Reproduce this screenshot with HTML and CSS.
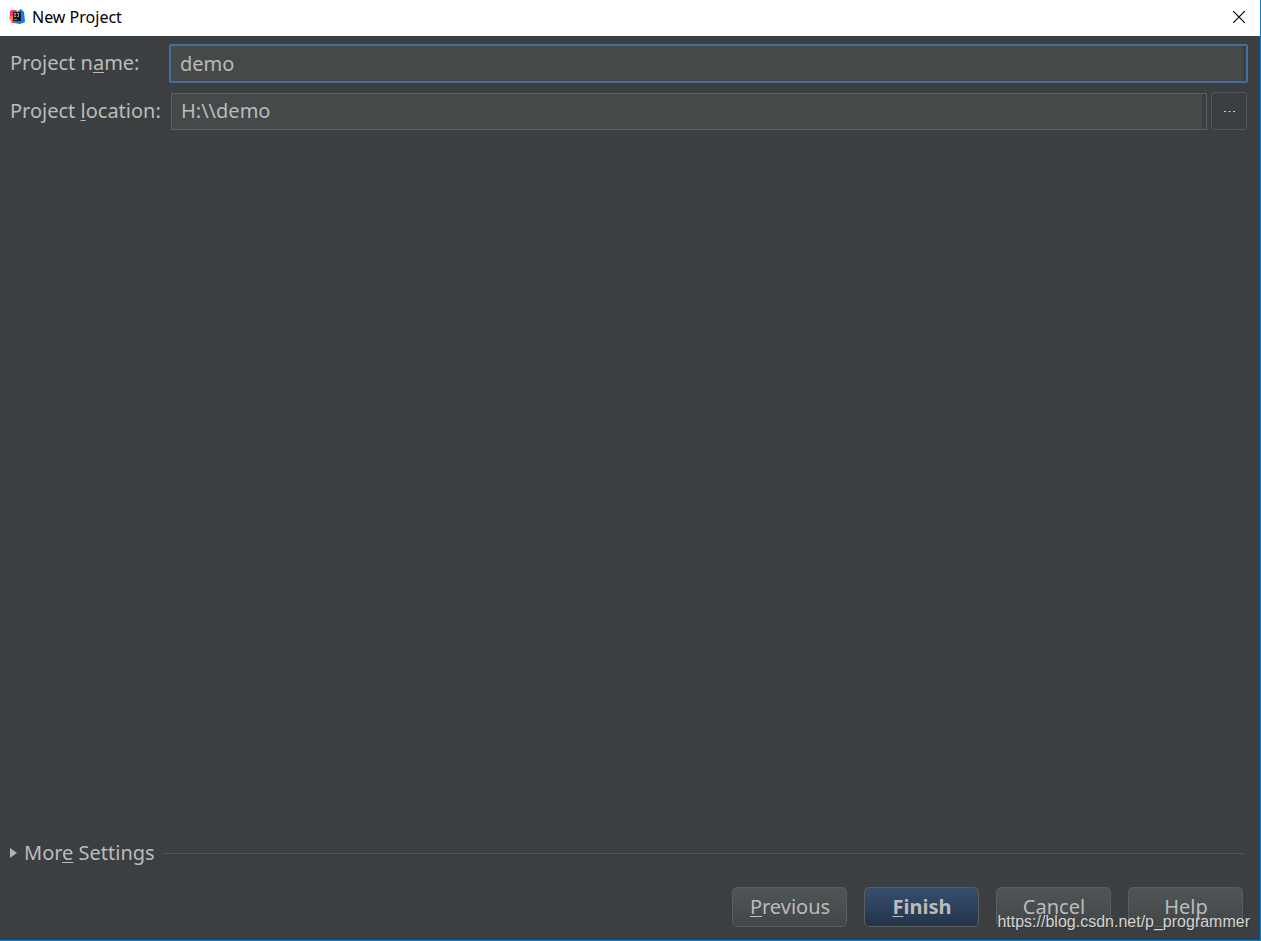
FILE: index.html
```html
<!DOCTYPE html>
<html lang="en">
<head>
  <meta charset="UTF-8" />
  <meta name="viewport" content="width=device-width, initial-scale=1.0"/>
  <title>New Project</title>
  <link rel="stylesheet" href="styles.css">
</head>
<body>

<header class="titlebar">
  <svg class="logo" width="16" height="16" viewBox="0 0 16 16" aria-hidden="true">
    <path d="M1 2L3 1L7 1L10 4L8 14L3 14L2 11L1 7z" fill="#fe3366"/>
    <path d="M0 8L4 7L5 12L1 11z" fill="#fc8a24"/>
    <path d="M9 2L12 0L15 3L16 13L11 15L5 14L9 11z" fill="#087cfa"/>
    <rect x="4" y="3" width="8" height="9" fill="#18161a"/>
    <path d="M5 4.500h2M6 4.500v3M5 7.500h2M8 4.500h2M9.500 4.500v3h-1.500" fill="none" stroke="#bbb" stroke-width="0.8"/>
    <path d="M5 10.500h3" stroke="#aaa" stroke-width="0.8"/>
  </svg>
  <h1>New Project</h1>
  <button type="button" class="close" aria-label="Close">
    <svg width="12" height="12" viewBox="0 0 12 12"><path d="M0 0L12 12M12 0L0 12" stroke="#000" stroke-width="1.2"/></svg>
  </button>
</header>

<form class="dialog">
  <div class="fields">
    <label for="name">Project n<u>a</u>me:</label>
    <input type="text" id="name" class="active" value="demo" />

    <label for="location">Project <u>l</u>ocation:</label>
    <div class="location">
      <input type="text" id="location" value="H:\\demo" />
      <button type="button" class="browse" aria-label="Browse">
        <svg width="11" height="2" viewBox="0 0 11 2"><path d="M0 1h2v1h-2zM4.500 1h2v1h-2zM9 1h2v1h-2z" fill="#ccc"/></svg>
      </button>
    </div>
  </div>

  <details class="more">
    <summary>
      <svg width="7" height="10" viewBox="0 0 7 10"><path d="M0 0L7 5L0 10z" fill="#afb1b3"/></svg>
      <span>Mor<u>e</u> Settings</span>
    </summary>
  </details>

  <div class="buttons">
    <button type="button"><u>P</u>revious</button>
    <button type="submit" class="primary"><u>F</u>inish</button>
    <button type="button">Cancel</button>
    <button type="button">Help</button>
  </div>
</form>

<div class="watermark">https://blog.csdn.net/p_programmer</div>

</body>
</html>
```
FILE: styles.css
```css
:root {
  --bg-color: #3c3f41;
  --field-bg: #45494a;
  --text-color: #bbbbbb;
  --border: #5e6162;
  --accent: #0b83dc;
}
* {
  box-sizing: border-box;
}
body {
  margin: 0;
  min-height: 100vh;
  display: flex;
  flex-direction: column;
  position: relative;
  background: var(--bg-color);
  color: var(--text-color);
  border-right: 1px solid var(--accent);
  border-bottom: 1px solid var(--accent);
  font-family: "Noto Sans", "Open Sans", sans-serif;
  font-size: 20px;
}
button, input {
  font: inherit;
  color: inherit;
}
u {
  text-decoration-thickness: 1px;
  text-underline-offset: 2px;
  text-decoration-skip-ink: none;
}
.titlebar {
  display: flex;
  align-items: center;
  height: 36px;
  padding: 0 15px 2px 9px;
  background: #fff;
  color: #000;
}
.titlebar h1 {
  flex: 1;
  margin: 0 0 0 7px;
  font-size: 16px;
  line-height: 20px;
  font-weight: normal;
}
.close {
  display: flex;
  padding: 0;
  border: none;
  background: none;
}
.dialog {
  flex: 1;
  display: flex;
  flex-direction: column;
  padding: 8px 12px 13px 10px;
}
.fields {
  display: grid;
  grid-template-columns: 151px 1fr;
  column-gap: 8px;
  row-gap: 9px;
  align-items: center;
}
label {
  line-height: 28px;
  padding-bottom: 1px;
  white-space: nowrap;
}
input {
  width: 100%;
  height: 37px;
  padding: 0 9px 2px;
  border: 1px solid var(--border);
  background: var(--field-bg);
  box-shadow: inset -4px 0 var(--bg-color);
  outline: none;
}
input.active {
  height: 39px;
  padding-bottom: 0;
  border: 2px solid #466d9f;
  border-radius: 2px;
  box-shadow: inset -3px 0 var(--bg-color);
}
.location {
  display: flex;
  align-items: center;
  gap: 4px;
  padding: 0 1px 0 2px;
}
.location input {
  flex: 1;
  min-width: 0;
}
.browse {
  display: flex;
  align-items: center;
  justify-content: center;
  width: 36px;
  height: 38px;
  padding: 0;
  border: 1px solid #55585a;
  border-radius: 3px;
  background: none;
}
.more {
  margin-top: auto;
}
summary {
  display: flex;
  align-items: center;
  list-style: none;
  line-height: 28px;
}
summary span {
  margin: 0 7px;
}
summary::after {
  content: "";
  flex: 1;
  height: 1px;
  margin-right: 3px;
  background: #515355;
}
.buttons {
  display: flex;
  justify-content: flex-end;
  gap: 17px;
  margin-top: 20px;
  padding-right: 5px;
}
.buttons button {
  width: 115px;
  height: 40px;
  padding: 0 0 2px 1px;
  border: 1px solid #5a5d5e;
  border-radius: 5px;
  background: linear-gradient(#505557, #414648) border-box;
}
.buttons .primary {
  background: linear-gradient(#365070, #243349) border-box;
  font-weight: bold;
}
.watermark {
  position: absolute;
  right: 10px;
  bottom: 8px;
  font: 16px/20px "Liberation Sans", Arial, sans-serif;
  color: #d4d4d4;
  text-shadow: 1px 1px 1px #333;
  pointer-events: none;
}
```
